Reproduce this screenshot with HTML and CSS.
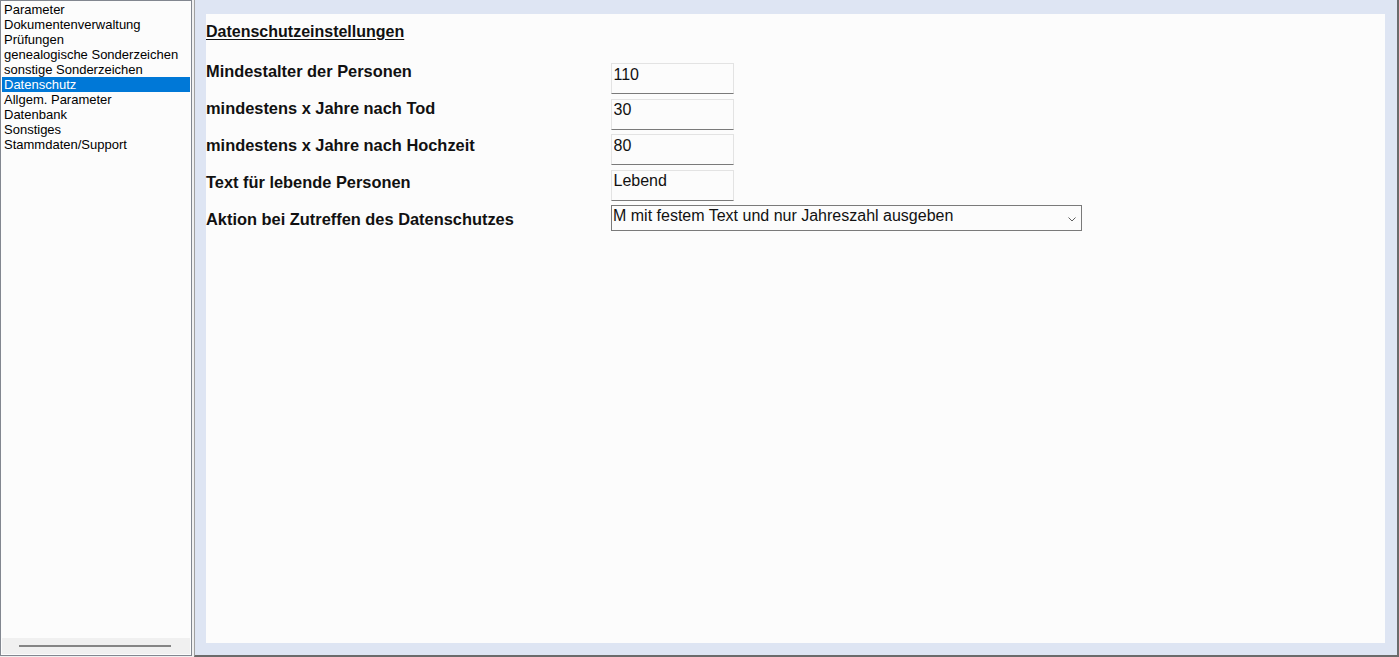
FILE: index.html
```html
<!DOCTYPE html>
<html lang="de">
<head>
<meta charset="utf-8">
<title>Datenschutzeinstellungen</title>
<link rel="stylesheet" href="styles.css">
</head>
<body>
<div class="app">
  <aside class="nav">
    <ul class="nav-list">
      <li>Parameter</li>
      <li>Dokumentenverwaltung</li>
      <li>Prüfungen</li>
      <li>genealogische Sonderzeichen</li>
      <li>sonstige Sonderzeichen</li>
      <li class="active">Datenschutz</li>
      <li>Allgem. Parameter</li>
      <li>Datenbank</li>
      <li>Sonstiges</li>
      <li>Stammdaten/Support</li>
    </ul>
    <div class="hscroll"><div class="hscroll-thumb"></div></div>
  </aside>
  <main class="panel">
    <div class="sheet">
      <h1 class="title">Datenschutzeinstellungen</h1>
      <div class="form">
        <div class="labels">
          <div class="label">Mindestalter der Personen</div>
          <div class="label">mindestens x Jahre nach Tod</div>
          <div class="label">mindestens x Jahre nach Hochzeit</div>
          <div class="label">Text für lebende Personen</div>
          <div class="label">Aktion bei Zutreffen des Datenschutzes</div>
        </div>
        <div class="controls">
          <input class="field" type="text" value="110">
          <input class="field" type="text" value="30">
          <input class="field" type="text" value="80">
          <input class="field" type="text" value="Lebend">
          <div class="combo">
            <span class="combo-text">M mit festem Text und nur Jahreszahl ausgeben</span>
            <svg class="combo-arrow" width="8" height="5" viewBox="0 0 8 5"><path d="M0.5 0.5 L4 4 L7.5 0.5" fill="none" stroke="#606060" stroke-width="1"/></svg>
          </div>
        </div>
      </div>
    </div>
  </main>
</div>
</body>
</html>
```
FILE: styles.css
```css
html, body {
  margin: 0;
  padding: 0;
}
body {
  background: #f0f0f0;
  font-family: "Liberation Sans", Arial, sans-serif;
  color: #000;
}
.app {
  display: flex;
  gap: 2px;
  height: 657px;
}
.nav {
  box-sizing: border-box;
  width: 192px;
  height: 656px;
  border: 1px solid #828790;
  padding: 1px;
  background: #fcfcfc;
  display: flex;
  flex-direction: column;
}
.nav-list {
  list-style: none;
  margin: 0;
  padding: 0;
  flex: 1;
  font-size: 13px;
  line-height: 15px;
}
.nav-list li {
  padding-left: 2px;
  height: 15px;
  white-space: nowrap;
}
.nav-list li.active {
  background: #0078d7;
  color: #fff;
}
.hscroll {
  box-sizing: border-box;
  height: 16px;
  background: #f0f0f0;
  padding: 7px 0 0 17px;
}
.hscroll-thumb {
  width: 152px;
  height: 2px;
  background: #858585;
}
.panel {
  flex: 1;
  box-sizing: border-box;
  height: 657px;
  border-left: 1px solid #a0a0a0;
  border-right: 2px solid #6b6b6b;
  border-bottom: 2px solid #6b6b6b;
  padding: 14px 12px 12px 11px;
  background: #dee5f3;
  display: flex;
}
.sheet {
  flex: 1;
  background: #fcfcfc;
}
.title {
  margin: 9px 0 0;
  font-size: 16px;
  font-weight: bold;
  line-height: 18px;
  text-decoration: underline;
  text-underline-offset: 2px;
  color: #111;
}
.form {
  display: flex;
  margin-top: 12px;
}
.labels {
  width: 405px;
  display: flex;
  flex-direction: column;
}
.label {
  font-size: 16.4px;
  font-weight: bold;
  line-height: 37px;
  height: 37px;
  white-space: nowrap;
  color: #111;
}
.controls {
  padding-top: 10px;
  display: flex;
  flex-direction: column;
  gap: 4.5px;
}
.field {
  display: block;
  box-sizing: border-box;
  width: 123px;
  height: 31px;
  margin: 0;
  border: 1px solid #e3e3e3;
  border-bottom-color: #7a7a7a;
  padding: 1px 2px 9px 1.5px;
  background: #fcfcfc;
  font-family: "Liberation Sans", Arial, sans-serif;
  font-size: 16px;
  color: #111;
  outline: none;
}
.combo {
  box-sizing: border-box;
  width: 471px;
  height: 26px;
  border: 1px solid #7a7a7a;
  padding: 1px 5px 0 1px;
  display: flex;
  justify-content: space-between;
  align-items: flex-start;
  background: #fcfcfc;
  font-size: 16px;
  line-height: 18px;
  color: #111;
}
.combo-text {
  white-space: nowrap;
}
.combo-arrow {
  margin-top: 10px;
  flex: none;
}
```
